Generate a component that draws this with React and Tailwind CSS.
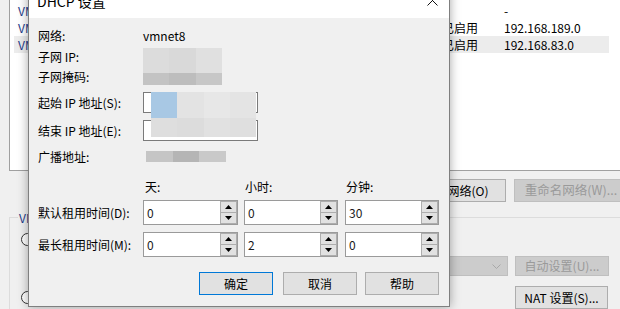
import React from 'react';

function Spinner({ value, width }) {
  return (
    <div className={`${width} h-[25px] flex border border-[#9a9a9a] bg-white`}>
      <div className="flex-1 pl-[3px] flex items-center text-[12px] text-[#1a1a1a]">{value}</div>
      <div className="w-[17px] flex flex-col">
        <div className="flex-1 flex items-center justify-center bg-[#e1e1e1] border border-[#adadad]">
          <svg width="7" height="4" viewBox="0 0 7 4"><path d="M0 4 L3.5 0 L7 4 Z" fill="#000" /></svg>
        </div>
        <div className="flex-1 flex items-center justify-center bg-[#e1e1e1] border border-[#adadad] border-t-0">
          <svg width="7" height="4" viewBox="0 0 7 4"><path d="M0 0 L3.5 4 L7 0 Z" fill="#000" /></svg>
        </div>
      </div>
    </div>
  );
}

function Btn({ children, primary }) {
  return (
    <div
      className={`w-[74px] h-[23px] flex items-center justify-center bg-[#e1e1e1] border text-[12px] ${
        primary ? 'border-[#0078d7]' : 'border-[#adadad]'
      }`}
    >
      {children}
    </div>
  );
}

const rows = [
  { name: 'VMnet0', dhcp: '-', subnet: '-' },
  { name: 'VMnet1', dhcp: '已启用', subnet: '192.168.189.0' },
  { name: 'VMnet8', dhcp: '已启用', subnet: '192.168.83.0', active: true },
];

export default function App() {
  return (
    <div className="relative w-[620px] h-[309px] overflow-hidden bg-[#f0f0f0] flex font-['Noto_Sans_CJK_SC',sans-serif] text-black">
      {/* window behind, left edge */}
      <div className="w-[4px] h-full flex flex-col overflow-hidden">
        <div className="h-[212px] bg-[repeating-linear-gradient(180deg,#cfcfcf_0px,#cfcfcf_3px,#9c9c9c_3px,#9c9c9c_4px,#e4e4e4_4px,#e4e4e4_6px)]" />
        <div className="mt-[67px] h-[16px] -ml-[3px] text-[12px] leading-[16px] text-[#2050b0]">j)</div>
      </div>

      {/* network editor */}
      <div className="flex-1 pl-[9px] flex flex-col">
        <div className="h-[172px] bg-white border-l border-b border-[#a0a0a0] pt-[2px] flex flex-col">
          {rows.map((r) => (
            <div
              key={r.name}
              className={`ml-[4px] w-[595px] h-[17px] pl-[4px] flex items-center text-[12px] ${
                r.active ? 'bg-[#ececec]' : ''
              }`}
            >
              <div className="w-[424px] text-[#1c3a8a]">{r.name}</div>
              <div className="w-[62px]">{r.dhcp}</div>
              <div>{r.subnet}</div>
            </div>
          ))}
        </div>

        <div className="mt-[8px] h-[23px] flex text-[12px]">
          <div className="ml-[397px] w-[100px] shrink-0 flex items-center justify-center bg-[#e1e1e1] border border-[#adadad]">
            移除网络(O)
          </div>
          <div className="ml-[8px] w-[114px] shrink-0 flex items-center justify-center bg-[#cccccc] border border-[#bfbfbf] text-[12.5px] text-[#9a9a9a]">
            重命名网络(W)...
          </div>
        </div>

        <div className="mt-[15px] flex-1 border-t border-l border-[#dcdcdc] flex flex-col">
          <div className="-mt-[8px] h-[16px] ml-[8px] flex">
            <span className="bg-[#f0f0f0] px-[1px] text-[12px] leading-[16px] text-[#1c3a8a]">VMnet 信息</span>
          </div>
          <div className="mt-[6px] h-[14px] flex items-center">
            <div className="ml-[11px] w-[13px] h-[13px] rounded-full border border-[#333] bg-white" />
          </div>
          <div className="mt-[10px] h-[20px] flex text-[12px]">
            <div className="ml-[146px] w-[352px] shrink-0 flex items-center justify-end pr-[6px] bg-[#cccccc] border border-[#bfbfbf]">
              <svg width="9" height="5" viewBox="0 0 9 5"><path d="M0.5 0.5 L4.5 4.5 L8.5 0.5" fill="none" stroke="#a8a8a8" /></svg>
            </div>
            <div className="ml-[7px] w-[94px] shrink-0 flex items-center justify-center bg-[#cccccc] border border-[#bfbfbf] text-[#9a9a9a]">
              自动设置(U)...
            </div>
          </div>
          <div className="mt-[10px] h-[23px] flex items-center text-[12px]">
            <div className="ml-[11px] w-[13px] h-[13px] shrink-0 rounded-full border border-[#333] bg-white" />
            <div className="ml-[481px] w-[93px] h-[23px] shrink-0 flex items-center justify-center bg-[#e1e1e1] border border-[#adadad]">
              NAT 设置(S)...
            </div>
          </div>
        </div>
      </div>

      {/* DHCP dialog */}
      <div className="absolute left-[28px] top-[-12px] w-[422px] h-[319px] border border-[#7f7f7f] bg-[#f0f0f0] flex flex-col shadow-[0_0_10px_rgba(0,0,0,0.35)]">
        <div className="h-[29px] shrink-0 bg-white flex items-start pl-[8px]">
          <span className="mt-[5px] text-[14px] leading-[14px]">DHCP 设置</span>
          <svg className="ml-auto mr-[11px] mt-[6px]" width="11" height="11" viewBox="0 0 11 11">
            <path d="M0.5 0.5 L10.5 10.5 M10.5 0.5 L0.5 10.5" stroke="#111" strokeWidth="1" />
          </svg>
        </div>

        <div className="flex flex-col pl-[9px] text-[12px]">
          <div className="mt-[9px] h-[18px] flex items-center">
            <div className="w-[105px] shrink-0">网络:</div>
            <div>vmnet8</div>
          </div>
          <div className="mt-[3px] h-[18px] flex items-center">
            <div className="w-[105px] shrink-0">子网 IP:</div>
          </div>
          <div className="mt-[2px] h-[18px] flex items-center">
            <div className="w-[105px] shrink-0">子网掩码:</div>
          </div>
          <div className="mt-[6px] h-[21px] flex items-center">
            <div className="w-[105px] shrink-0">起始 IP 地址(S):</div>
            <div className="w-[115px] h-[21px] bg-white border border-[#7a7a7a]" />
          </div>
          <div className="mt-[7px] h-[21px] flex items-center">
            <div className="w-[105px] shrink-0">结束 IP 地址(E):</div>
            <div className="w-[115px] h-[21px] bg-white border border-[#7a7a7a]" />
          </div>
          <div className="mt-[7px] h-[18px] flex items-center">
            <div className="w-[105px] shrink-0">广播地址:</div>
          </div>
          <div className="mt-[12px] h-[18px] flex items-center">
            <div className="w-[105px] shrink-0" />
            <div className="w-[95px] pl-[2px]">天:</div>
            <div className="ml-[6px] w-[94px] pl-[1px]">小时:</div>
            <div className="ml-[7px] w-[94px] pl-[1px]">分钟:</div>
          </div>
          <div className="mt-[4px] h-[25px] flex items-center">
            <div className="w-[105px] shrink-0">默认租用时间(D):</div>
            <Spinner value="0" width="w-[95px]" />
            <div className="ml-[6px]"><Spinner value="0" width="w-[94px]" /></div>
            <div className="ml-[7px]"><Spinner value="30" width="w-[94px]" /></div>
          </div>
          <div className="mt-[7px] h-[25px] flex items-center">
            <div className="w-[105px] shrink-0">最长租用时间(M):</div>
            <Spinner value="0" width="w-[95px]" />
            <div className="ml-[6px]"><Spinner value="2" width="w-[94px]" /></div>
            <div className="ml-[7px]"><Spinner value="0" width="w-[94px]" /></div>
          </div>
          <div className="mt-[15px] h-[23px] flex justify-end pr-[10px]">
            <Btn primary>确定</Btn>
            <div className="ml-[10px]"><Btn>取消</Btn></div>
            <div className="ml-[8px]"><Btn>帮助</Btn></div>
          </div>
        </div>

        {/* redacted values */}
        <div className="absolute left-[114px] top-[59px] w-[79px] h-[37px] grid grid-cols-[26px_27px_26px] grid-rows-[25px_12px]">
          <div className="bg-[#dcdcdc]" />
          <div className="bg-[#d9d9d9]" />
          <div className="bg-[#e0e0e0]" />
          <div className="bg-[#c3c3c3]" />
          <div className="bg-[#bdbdbd]" />
          <div className="bg-[#c7c7c7]" />
        </div>
        <div className="absolute left-[122px] top-[103px] w-[105px] h-[45px] grid grid-cols-4 grid-rows-[26px_19px]">
          <div className="bg-[#a8c8e4]" />
          <div className="bg-[#e3e3e3]" />
          <div className="bg-[#e7e7e7]" />
          <div className="bg-[#e4e4e4]" />
          <div className="bg-[#dedede]" />
          <div className="bg-[#dcdcdc]" />
          <div className="bg-[#e1e1e1]" />
          <div className="bg-[#dfdfdf]" />
        </div>
        <div className="absolute left-[117px] top-[162px] w-[80px] h-[11px] grid grid-cols-3">
          <div className="bg-[#c5c5c5]" />
          <div className="bg-[#b5b5b5]" />
          <div className="bg-[#c9c9c9]" />
        </div>
      </div>
    </div>
  );
}
